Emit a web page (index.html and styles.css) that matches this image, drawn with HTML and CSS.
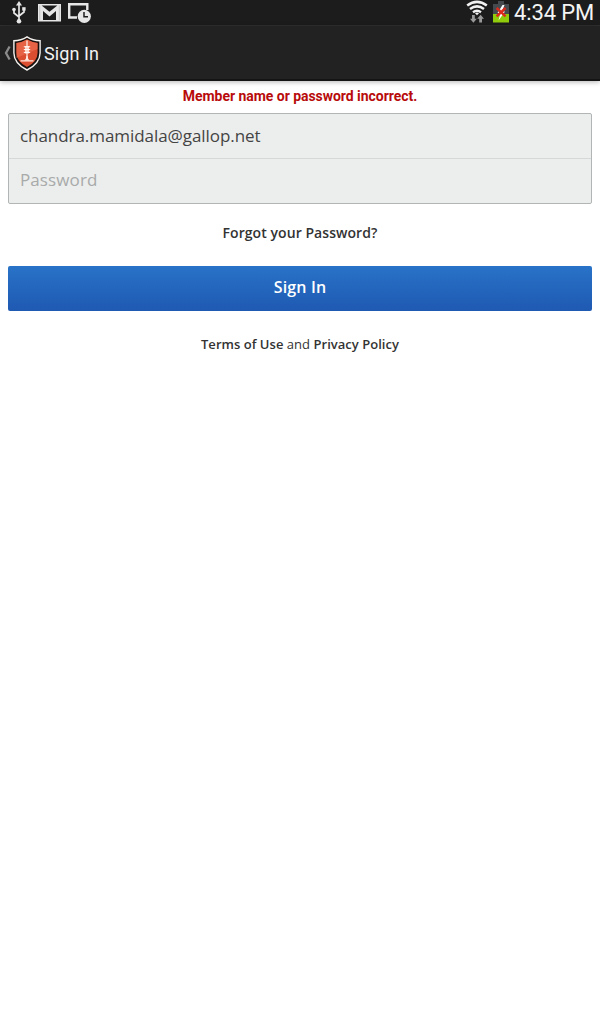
FILE: index.html
```html
<!DOCTYPE html>
<html lang="en">
<head>
<meta charset="utf-8">
<title>Sign In</title>
<link rel="stylesheet" href="styles.css">
</head>
<body>
<header class="status-bar">
  <div class="status-left">
    <svg class="icon-usb" width="16" height="23" viewBox="0 0 16 23">
      <path d="M8 3V20M3 9V12L8 16M13 8V11L8 15" fill="none" stroke="#e6e6e6" stroke-width="1.7"/>
      <path d="M8 0L11 4.5H5Z" fill="#e6e6e6"/><circle cx="8" cy="20.3" r="2.3" fill="#e6e6e6"/>
      <circle cx="3" cy="8.6" r="1.8" fill="#e6e6e6"/><path d="M11.2 6.2H14.6V9.6H11.2Z" fill="#e6e6e6"/>
    </svg>
    <svg class="icon-mail" width="23" height="18" viewBox="0 0 23 18">
      <path d="M0 0H23V17.5H0Z" fill="#e6e6e6"/>
      <path d="M3.6 1.4H19.4L11.5 7.8Z" fill="#1c1c1c"/>
      <path d="M5 16V7L11.5 12.4L18 7V16Z" fill="#1c1c1c"/>
      <path d="M1.7 1.5V16.3M21.3 1.5V16.3" stroke="#aaa" stroke-width=".6"/>
    </svg>
    <svg class="icon-clock" width="24" height="20" viewBox="0 0 24 20">
      <path d="M9 14.5H1.2V1.2H19.3V7" fill="none" stroke="#e6e6e6" stroke-width="2.4"/>
      <circle cx="16.3" cy="13.3" r="6.6" fill="#e6e6e6"/>
      <path d="M16 9V13.8H20" fill="none" stroke="#1c1c1c" stroke-width="1.5"/>
    </svg>
  </div>
  <div class="status-right">
    <svg class="icon-wifi" width="22" height="24" viewBox="0 0 22 24">
      <g fill="none" stroke="#f2f2f2" stroke-width="2.5">
        <path d="M1.2 5.6Q11 -1.8 20.8 5.6"/><path d="M4 9Q11 3.8 18 9"/><path d="M7 12.2Q11 9.4 15 12.2"/>
      </g>
      <path d="M9 13.2Q11 11.8 13 13.2L11 15.3Z" fill="#f2f2f2"/>
      <path d="M6 15H8.8V18.8H10.8L7.4 22.8L4 18.8H6ZM13.2 22.5H16V18.8H18L14.6 14.8L11.2 18.8H13.2Z" fill="#999"/>
    </svg>
    <svg class="icon-battery" width="16" height="22" viewBox="0 0 16 22">
      <path d="M5 0H11V3H16V13H0V3H5Z" fill="#454a4f"/>
      <path d="M0 13H16V21.5H0Z" fill="#91cc0c"/>
      <path d="M9.5 4L4.5 12H7.5L5.5 19.5L12 10.5H9L11.5 4Z" fill="#fff"/>
      <path d="M3.6 7L12.6 15.4M12.6 7L3.6 15.4" stroke="#d92a1c" stroke-width="2.5"/>
    </svg>
    <span class="time">4:34 PM</span>
  </div>
</header>
<nav class="action-bar">
  <svg class="icon-back" width="8" height="16" viewBox="0 0 8 16"><path d="M6.6 1.5L3 8L6.6 14.5" fill="none" stroke="#8b8b8b" stroke-width="2.3"/></svg>
  <svg class="icon-shield" width="28" height="35" viewBox="0 0 28 35">
    <path d="M14 .8Q20 4.6 27.1 4.8V17Q27 27.5 14 34Q1 27.5 .9 17V4.8Q8 4.6 14 .8Z" fill="#17110f" stroke="#f5f3f0" stroke-width="1.4"/>
    <path d="M14 3.6Q19 6.5 24.6 7V17Q24.5 25.5 14 31Q3.5 25.5 3.4 17V7Q9 6.5 14 3.6Z" fill="#dc4e30"/>
    <path d="M14 3.6Q19 6.5 24.6 7V13L3.4 22V7Q9 6.5 14 3.6Z" fill="#ee7557" opacity=".55"/>
    <path d="M14 4.5V24M7.5 24.8H20.5" stroke="#ffe8dd" stroke-width="1.3"/>
    <path d="M12 10H16V17.5H12Z" fill="#ffd5c5"/>
    <path d="M10.8 10.8H17.2M10.8 13.6H17.2M10.8 16.4H17.2" stroke="#fff" stroke-width="1"/>
    <path d="M11.2 24.5Q13.4 23 13.4 20H14.6Q14.6 23 16.8 24.5Z" fill="#ffe8dd"/>
  </svg>
  <h1 class="title">Sign In</h1>
</nav>
<main class="content">
  <p class="error">Member name or password incorrect.</p>
  <form class="form">
    <div class="fields">
      <div class="field"><span class="email">chandra.mamidala@gallop.net</span></div>
      <div class="field"><span class="placeholder">Password</span></div>
    </div>
    <a class="forgot">Forgot your Password?</a>
    <button class="submit" type="button"><span>Sign In</span></button>
  </form>
  <p class="legal"><b>Terms of Use</b> and <b>Privacy Policy</b></p>
</main>
</body>
</html>
```
FILE: styles.css
```css
* { box-sizing: border-box; }
body { margin: 0; min-height: 1024px; background: #fff; color: #333; font-family: "Open Sans", sans-serif; }
p, h1 { margin: 0; }
svg { display: block; flex: none; }
.status-bar { height: 26px; background: #1c1c1c; border-bottom: 1px solid #303030; display: flex; justify-content: space-between; }
.status-left, .status-right { display: flex; align-items: flex-start; }
.status-left { padding-left: 11px; }
.icon-usb { margin-top: 1px; }
.icon-mail { margin: 4px 0 0 11px; }
.icon-clock { margin: 3px 0 0 7px; }
.status-right { padding-right: 6px; }
.icon-wifi { margin-top: 0; }
.icon-battery { margin: 1px 5px 0 5px; }
.time { font: 22px/25px Roboto, sans-serif; letter-spacing: -.15px; color: #f4f4f4; white-space: nowrap; }
.action-bar { height: 55px; background: #222; border-bottom: 2px solid #141414; display: flex; align-items: center; padding-left: 3px; box-shadow: 0 1px 5px rgba(0,0,0,.3); }
.icon-shield { margin: 1px 0 0 2px; }
.title { margin-left: 3px; font: 400 18px/24px Roboto, sans-serif; letter-spacing: .1px; color: #f2f2f2; padding-top: 2px; }
.content { padding: 6px 8px 0; text-align: center; }
.error { height: 26px; font: 700 14px/18px Roboto, sans-serif; letter-spacing: -.04px; color: #b80b0b; }
.form { display: flex; flex-direction: column; }
.fields { height: 91px; border: 1px solid #b1b5b6; border-radius: 2px; background: #eceeed; text-align: left; }
.field { height: 44px; padding: 0 11px; font-size: 17px; line-height: 44px; }
.field + .field { height: 45px; border-top: 1px solid #d5d8d8; line-height: 42px; }
.email { color: #444; letter-spacing: -.06px; }
.placeholder { color: #a8aaaa; letter-spacing: .1px; }
.forgot { margin-top: 18px; height: 44px; font-size: 14px; font-weight: 600; line-height: 22px; letter-spacing: .06px; }
.submit { height: 45px; border: 0; border-radius: 2px; padding: 0 0 3px; background: linear-gradient(#2873c8, #1f59b2); color: #fff; font: 600 16px/22px "Open Sans", sans-serif; letter-spacing: .15px; }
.legal { margin-top: 23px; font-size: 13px; line-height: 20px; letter-spacing: .03px; }
.legal b { font-weight: 600; }
```
